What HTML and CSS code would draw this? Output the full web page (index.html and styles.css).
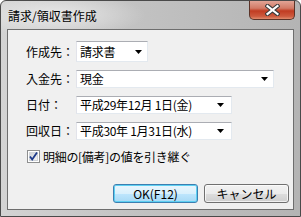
FILE: index.html
```html
<!DOCTYPE html>
<html lang="ja">
<head>
<meta charset="utf-8">
<title>請求/領収書作成</title>
<link rel="stylesheet" href="styles.css">
</head>
<body>
<div class="window">
  <div class="titlebar">
    <span class="title">請求/領収書作成</span>
    <div class="close">
      <svg width="15" height="12" viewBox="0 0 15 12">
        <path d="M2.5 2 L12.5 10 M12.5 2 L2.5 10" stroke="#3b3b3b" stroke-width="4.2" stroke-linecap="square" fill="none"/>
        <path d="M2.5 2 L12.5 10 M12.5 2 L2.5 10" stroke="#ffffff" stroke-width="2.2" stroke-linecap="square" fill="none"/>
      </svg>
    </div>
  </div>
  <div class="client">
    <div class="row row-first">
      <span class="lbl">作成先：</span>
      <div class="combo combo-short combo-tall"><span class="val">請求書</span><svg class="arrow" width="7" height="4" viewBox="0 0 7 4"><polygon points="0,0 7,0 3.5,4" fill="#000"/></svg></div>
    </div>
    <div class="row">
      <span class="lbl">入金先：</span>
      <div class="combo combo-long"><span class="val">現金</span><svg class="arrow" width="7" height="4" viewBox="0 0 7 4"><polygon points="0,0 7,0 3.5,4" fill="#000"/></svg></div>
    </div>
    <div class="row">
      <span class="lbl">日付：</span>
      <div class="combo combo-date"><span class="val">平成29年12月 1日(金)</span><svg class="arrow" width="7" height="4" viewBox="0 0 7 4"><polygon points="0,0 7,0 3.5,4" fill="#000"/></svg></div>
    </div>
    <div class="row">
      <span class="lbl">回収日：</span>
      <div class="combo combo-date"><span class="val">平成30年 1月31日(水)</span><svg class="arrow" width="7" height="4" viewBox="0 0 7 4"><polygon points="0,0 7,0 3.5,4" fill="#000"/></svg></div>
    </div>
    <div class="check-row">
      <span class="checkbox">
        <svg width="13" height="13" viewBox="0 0 13 13">
          <defs>
            <linearGradient id="cb" x1="0" y1="0" x2="1" y2="1">
              <stop offset="0" stop-color="#cbcfd5"/>
              <stop offset="1" stop-color="#f6f6f6"/>
            </linearGradient>
          </defs>
          <rect x="0.5" y="0.5" width="12" height="12" fill="#fff" stroke="#8e8f8f"/>
          <rect x="2.5" y="2.5" width="8" height="8" fill="url(#cb)" stroke="#d0d4d9"/>
          <path d="M3 6.5 L5.2 9.5 L10 2.5" stroke="#1d3a8a" stroke-width="1.8" fill="none"/>
        </svg>
      </span>
      <span class="check-label">明細の[備考]の値を引き継ぐ</span>
    </div>
    <div class="buttons">
      <button class="btn btn-default">OK(F12)</button>
      <button class="btn">キャンセル</button>
    </div>
  </div>
</div>
</body>
</html>
```
FILE: styles.css
```css
html, body {
  margin: 0;
  padding: 0;
  background: #ffffff;
}

body {
  font-family: "Noto Sans CJK JP", "Noto Sans", sans-serif;
  font-size: 12px;
  color: #000;
}

.window {
  box-sizing: border-box;
  width: 301px;
  height: 217px;
  border: 1px solid #4a4a4a;
  border-radius: 6px 6px 0 0;
  display: flex;
  flex-direction: column;
  background:
    radial-gradient(ellipse 90px 22px at 55px 14px, rgba(255,255,255,0.55), rgba(255,255,255,0) 100%),
    linear-gradient(to right, #d3d3d3 0%, #c2c2c2 45%, #b4b4b4 100%);
  overflow: hidden;
}

.titlebar {
  height: 28px;
  display: flex;
  justify-content: space-between;
  align-items: flex-start;
  padding-left: 7px;
  padding-right: 5px;
  flex: none;
}

.title {
  align-self: center;
  line-height: 14px;
  font-size: 12px;
  margin-top: 1px;
  color: #000;
}

.close {
  width: 46px;
  height: 19px;
  box-sizing: border-box;
  border: 1px solid #5b3328;
  border-top: none;
  border-radius: 0 0 5px 5px;
  background: linear-gradient(to bottom, #e2a496 0%, #d27a66 40%, #c13c22 55%, #cd5a3e 85%, #e08c6d 100%);
  display: flex;
  align-items: center;
  justify-content: center;
}

.client {
  flex: 1;
  margin: 0 6px 6px 6px;
  border: 1px solid #6e6e6e;
  background: #f0f0f0;
  padding: 11px 0 0 18px;
  display: flex;
  flex-direction: column;
}

.row {
  display: flex;
  align-items: center;
  height: 18px;
  margin-bottom: 8px;
}

.row-first {
  height: 21px;
}

.lbl {
  width: 50px;
  line-height: 14px;
  white-space: nowrap;
}

.combo {
  box-sizing: border-box;
  height: 18px;
  background: #fff;
  border: 1px solid #e3e9ef;
  border-top-color: #abadb3;
  border-left-color: #e2e3ea;
  display: flex;
  align-items: center;
  justify-content: space-between;
  padding: 0 5px 0 3px;
  white-space: nowrap;
}

.combo-tall {
  height: 21px;
}

.combo-short {
  width: 72px;
}

.combo-long {
  width: 198px;
}

.combo-date {
  width: 156px;
  padding-right: 7px;
}

.val {
  line-height: 14px;
  letter-spacing: -0.3px;
}

.arrow {
  display: block;
  flex: none;
}

.check-row {
  display: flex;
  align-items: center;
  height: 13px;
  margin-top: 2px;
  padding-left: 1px;
}

.checkbox {
  width: 13px;
  height: 13px;
  display: block;
  margin-right: 3px;
}

.checkbox svg {
  display: block;
}

.check-label {
  line-height: 14px;
  white-space: nowrap;
  letter-spacing: -0.3px;
}

.buttons {
  display: flex;
  justify-content: flex-end;
  gap: 6px;
  margin-top: 21px;
  padding-right: 4px;
}

.btn {
  box-sizing: border-box;
  width: 85px;
  height: 19px;
  padding: 0;
  font-family: "Noto Sans CJK JP", "Noto Sans", sans-serif;
  font-size: 12px;
  line-height: 14px;
  color: #000;
  border: 1px solid #707070;
  border-radius: 3px;
  background: linear-gradient(to bottom, #f2f2f2 0%, #ebebeb 50%, #dddddd 51%, #cfcfcf 100%);
  box-shadow: inset 0 0 0 1px rgba(255,255,255,0.7);
}

.btn-default {
  border-color: #3c7fb1;
  background: linear-gradient(to bottom, #eaf6fd 0%, #d9f0fc 50%, #bee6fd 51%, #a7d9f5 100%);
  box-shadow: inset 0 0 0 1px #5ed0f2;
}
```
